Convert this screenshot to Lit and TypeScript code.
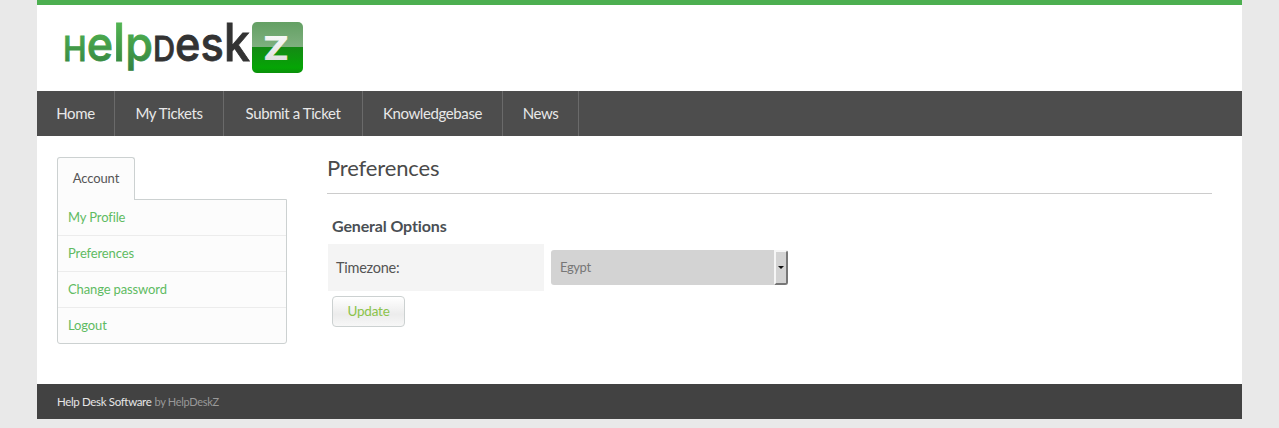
import { LitElement, html, css } from "lit";
import { customElement } from "lit/decorators.js";

const NAV = ["Home", "My Tickets", "Submit a Ticket", "Knowledgebase", "News"];
const SIDE = ["My Profile", "Preferences", "Change password", "Logout"];

@customElement("app-root")
export class AppRoot extends LitElement {
  static styles = css`
    :host { display: block; background: #e9e9e9; min-height: 428px; font-family: "Lato", "Open Sans", sans-serif; color: #444; }
    .wrap { width: 1205px; margin-left: 37px; background: #fff; border-top: 5px solid #4caf50; }
    .head { height: 86px; padding: 0 0 0 20px; display: flex; align-items: flex-start; }
    .logo { display: block; margin-top: 12px; }
    .nav { height: 45px; background: #4d4d4d; display: flex; }
    .nav a { display: flex; align-items: center; justify-content: center; box-sizing: border-box; padding: 0 0 2px; color: #e8e8e8; font-size: 15px; letter-spacing: -0.4px; border-right: 1px solid #6a6a6a; }
    .nav a:nth-child(1) { width: 78px; }
    .nav a:nth-child(2) { width: 109px; }
    .nav a:nth-child(3) { width: 139px; }
    .nav a:nth-child(4) { width: 140px; }
    .nav a:nth-child(5) { width: 76px; }
    .main { display: flex; padding: 21px 30px 40px 20px; height: 248px; box-sizing: border-box; }
    .side { width: 230px; margin-right: 40px; flex: none; }
    .tab { width: 78px; height: 43px; box-sizing: border-box; padding-bottom: 2px; border: 1px solid #ccd1d1; border-bottom: none; border-radius: 3px 3px 0 0; background: #fcfcfc; display: flex; align-items: center; justify-content: center; font-size: 13px; letter-spacing: -0.13px; color: #555; position: relative; z-index: 1; }
    .list { margin-top: -1px; border: 1px solid #ccd1d1; border-radius: 0 0 3px 3px; background: #fcfcfc; }
    .list a { display: flex; align-items: center; height: 36px; box-sizing: border-box; padding: 0 0 2px 10px; font-size: 13px; letter-spacing: -0.13px; color: #5fbb62; border-top: 1px solid #ececec; }
    .list a:first-child { border-top: none; height: 35px; }
    .content { flex: 1; min-width: 0; }
    h1 { margin: 0; font-weight: 400; font-size: 22px; letter-spacing: -0.15px; line-height: 22px; color: #4a4a4a; border-bottom: 1px solid #ccc; height: 37px; box-sizing: border-box; }
    h2 { margin: 22px 0 0 5px; font-size: 16px; letter-spacing: -0.13px; line-height: 20px; font-weight: 700; color: #4a4f54; height: 28px; }
    .row { display: flex; margin-left: 1px; }
    .label { width: 216px; height: 47px; box-sizing: border-box; padding: 0 0 1px 8px; background: #f4f4f4; display: flex; align-items: center; font-size: 14.5px; letter-spacing: -0.25px; color: #555; }
    .cell { padding: 6px 0 0 7px; }
    .select { width: 237px; height: 35px; box-sizing: border-box; background: #d3d3d3; border-radius: 3px; display: flex; align-items: center; justify-content: space-between; padding-left: 9px; font-size: 13px; letter-spacing: -0.4px; color: #777; }
    .text { padding-bottom: 2px; }
    .arrow { width: 14px; height: 35px; box-sizing: border-box; background: #d3d3d3; border: 2px solid; border-color: #f6f6f6 #777 #777 #f6f6f6; border-radius: 0 3px 3px 0; display: flex; align-items: center; justify-content: center; }
    .arrow i { display: block; width: 0; height: 0; border: 3px solid transparent; border-top: 3px solid #111; border-bottom: 0; }
    .btn { margin: 5px 0 0 5px; width: 73px; height: 31px; box-sizing: border-box; padding-bottom: 1px; border: 1px solid #ccd1d1; border-radius: 4px; background: linear-gradient(#fff, #ececec 60%, #f7f7f7); display: flex; align-items: center; justify-content: center; color: #8bc34a; font-size: 13.5px; letter-spacing: -0.2px; }
    .foot { height: 35px; background: #424242; display: flex; align-items: center; padding-left: 20px; font-size: 11.5px; letter-spacing: -0.35px; color: #e6e6e6; }
    .foot span { color: #999; margin-left: 3px; font-size: 11px; letter-spacing: -0.3px; }
    .lg { font-family: "Inter", "Lato", sans-serif; font-weight: 500; stroke-width: 0.8; }
    .zt { font-family: "Inter", sans-serif; font-weight: 800; }
  `;

  logo() {
    return html`<svg class="logo" width="250" height="62" viewBox="0 0 250 62" role="img" aria-label="HelpDeskZ">
      <defs>
        <linearGradient id="g" gradientUnits="userSpaceOnUse" x1="0" y1="5" x2="0" y2="57"><stop offset="0" stop-color="#52b552"/><stop offset="1" stop-color="#327f3e"/></linearGradient>
        <linearGradient id="bz" x1="0" y1="0" x2="0" y2="1"><stop offset="0" stop-color="#64a064"/><stop offset=".5" stop-color="#7fb07f"/><stop offset=".5" stop-color="#148a14"/><stop offset=".9" stop-color="#05a505"/><stop offset="1" stop-color="#0b8f0b"/></linearGradient>
        <linearGradient id="zg" x1="0" y1="0" x2="0" y2="1"><stop offset="0" stop-color="#fff"/><stop offset="1" stop-color="#d8d8d8"/></linearGradient>
      </defs>
      <text class="lg" x="6" y="44" textLength="90" lengthAdjust="spacingAndGlyphs" fill="url(#g)" stroke="url(#g)"><tspan font-size="34">H</tspan><tspan font-size="48">e</tspan><tspan font-size="52">l</tspan><tspan font-size="48">p</tspan></text>
      <text class="lg" x="96" y="44" textLength="97" lengthAdjust="spacingAndGlyphs" fill="#333" stroke="#333"><tspan font-size="34">D</tspan><tspan font-size="48">es</tspan><tspan font-size="52">k</tspan></text>
      <rect x="195" y="5" width="51" height="51" rx="5" fill="url(#bz)"/>
      <text class="zt" transform="translate(206 43) scale(1.2 1)" font-size="32" fill="url(#zg)">Z</text>
    </svg>`;
  }

  render() {
    return html`<div class="wrap">
      <div class="head">${this.logo()}</div>
      <div class="nav">${NAV.map((n) => html`<a>${n}</a>`)}</div>
      <div class="main">
        <div class="side">
          <div class="tab">Account</div>
          <div class="list">${SIDE.map((s) => html`<a>${s}</a>`)}</div>
        </div>
        <div class="content">
          <h1>Preferences</h1>
          <h2>General Options</h2>
          <div class="row">
            <div class="label">Timezone:</div>
            <div class="cell"><div class="select"><span class="text">Egypt</span><div class="arrow"><i></i></div></div></div>
          </div>
          <div class="btn">Update</div>
        </div>
      </div>
      <div class="foot">Help Desk Software<span>by HelpDeskZ</span></div>
    </div>`;
  }
}
